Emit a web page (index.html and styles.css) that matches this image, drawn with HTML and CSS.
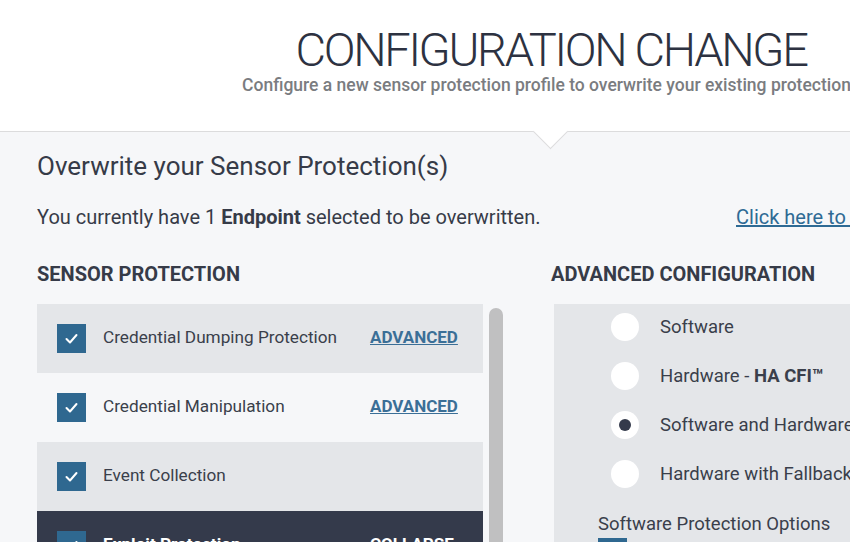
FILE: index.html
```html
<!DOCTYPE html>
<html>
<head>
<meta charset="utf-8">
<link rel="stylesheet" href="styles.css">
</head>
<body>
<div class="page">
  <header class="hero">
    <h1 class="hero-title">CONFIGURATION CHANGE</h1>
    <p class="hero-sub">Configure a new sensor protection profile to overwrite your existing protections</p>
  </header>
  <section class="panel">
    <div class="notch"></div>
    <h2 class="panel-title">Overwrite your Sensor Protection(s)</h2>
    <div class="info-row">
      <p class="info">You currently have 1 <b>Endpoint</b> selected to be overwritten.</p>
      <a class="info-link" href="#">Click here to change selection</a>
    </div>
    <div class="cols">
      <div class="col-left">
        <h3 class="section-head">SENSOR PROTECTION</h3>
        <div class="list-wrap">
          <ul class="list">
            <li class="item item-gray">
              <span class="cb"><svg viewBox="0 0 29 29" width="29" height="29"><polyline points="9.5,15 13,18.5 19.5,11" fill="none" stroke="#fff" stroke-width="2" stroke-linecap="round" stroke-linejoin="round"/></svg></span>
              <span class="item-label">Credential Dumping Protection</span>
              <a class="item-link" href="#">ADVANCED</a>
            </li>
            <li class="item item-light">
              <span class="cb"><svg viewBox="0 0 29 29" width="29" height="29"><polyline points="9.5,15 13,18.5 19.5,11" fill="none" stroke="#fff" stroke-width="2" stroke-linecap="round" stroke-linejoin="round"/></svg></span>
              <span class="item-label">Credential Manipulation</span>
              <a class="item-link" href="#">ADVANCED</a>
            </li>
            <li class="item item-gray">
              <span class="cb"><svg viewBox="0 0 29 29" width="29" height="29"><polyline points="9.5,15 13,18.5 19.5,11" fill="none" stroke="#fff" stroke-width="2" stroke-linecap="round" stroke-linejoin="round"/></svg></span>
              <span class="item-label">Event Collection</span>
            </li>
            <li class="item item-dark">
              <span class="cb"><svg viewBox="0 0 29 29" width="29" height="29"><polyline points="9.5,15 13,18.5 19.5,11" fill="none" stroke="#fff" stroke-width="2" stroke-linecap="round" stroke-linejoin="round"/></svg></span>
              <span class="item-label item-label-bold">Exploit Protection</span>
              <a class="item-link item-link-dark" href="#">COLLAPSE</a>
            </li>
          </ul>
          <div class="scrollbar"></div>
        </div>
      </div>
      <div class="col-right">
        <h3 class="section-head">ADVANCED CONFIGURATION</h3>
        <div class="adv-box">
          <ul class="radios">
            <li class="radio-row"><span class="radio"></span><span class="radio-label">Software</span></li>
            <li class="radio-row"><span class="radio"></span><span class="radio-label">Hardware - <b>HA CFI™</b></span></li>
            <li class="radio-row"><span class="radio radio-on"></span><span class="radio-label">Software and Hardware</span></li>
            <li class="radio-row"><span class="radio"></span><span class="radio-label">Hardware with Fallback</span></li>
          </ul>
          <p class="opt-head">Software Protection Options</p>
          <span class="opt-cb"></span>
        </div>
      </div>
    </div>
  </section>
</div>
</body>
</html>
```
FILE: styles.css
```css
html, body {
  margin: 0;
  padding: 0;
  background: #ffffff;
}
body {
  width: 850px;
  height: 542px;
  overflow: hidden;
  font-family: Roboto, "Liberation Sans", sans-serif;
  color: #363b48;
}
.page {
  width: 1102px;
}
.hero {
  height: 131px;
  text-align: center;
  box-sizing: border-box;
  padding-top: 26px;
}
.hero-title {
  margin: 0;
  font-size: 47px;
  font-weight: 300;
  line-height: 48px;
  color: #2d3241;
  letter-spacing: -2.3px;
}
.hero-sub {
  margin: 1px 0 0;
  font-size: 17.5px;
  font-weight: 500;
  line-height: 20px;
  color: #7a7c80;
}
.panel {
  position: relative;
  border-top: 1px solid #dcdcdd;
  background: #f6f7f9;
  padding: 18px 37px 0;
  height: 420px;
}
.notch {
  position: absolute;
  left: 538px;
  top: -13px;
  width: 24px;
  height: 24px;
  background: #ffffff;
  border-right: 1px solid #dcdcdd;
  border-bottom: 1px solid #dcdcdd;
  transform: rotate(45deg);
}
.panel-title {
  margin: 0;
  font-size: 26px;
  font-weight: 400;
  line-height: 32px;
  color: #363b48;
}
.info-row {
  display: flex;
  margin-top: 23px;
  align-items: baseline;
}
.info {
  margin: 0;
  font-size: 20px;
  line-height: 24px;
  width: 699px;
  flex: none;
}
.info b {
  font-weight: 700;
}
.info-link {
  font-size: 20px;
  line-height: 24px;
  color: #2e6a94;
  text-decoration: underline;
  white-space: nowrap;
}
.cols {
  display: flex;
  margin-top: 33px;
}
.col-left {
  width: 466px;
  flex: none;
}
.col-right {
  margin-left: 48px;
  flex: none;
  width: 600px;
}
.section-head {
  margin: 0;
  font-size: 20px;
  font-weight: 700;
  line-height: 24px;
  color: #363b48;
}
.list-wrap {
  display: flex;
  margin-top: 18px;
}
.list {
  list-style: none;
  margin: 0;
  padding: 0;
  width: 446px;
}
.item {
  display: flex;
  align-items: center;
  height: 69px;
  padding-left: 20px;
  box-sizing: border-box;
}
.item-gray { background: #e4e6e9; }
.item-light { background: #f6f7f9; }
.item-dark { background: #343a4b; }
.cb {
  width: 29px;
  height: 29px;
  background: #2f6890;
  flex: none;
  display: block;
}
.cb svg { display: block; }
.item-label {
  margin-left: 17px;
  margin-bottom: 3px;
  font-size: 17.2px;
  color: #3a3f4b;
  width: 267px;
  flex: none;
}
.item-label-bold {
  font-weight: 700;
  color: #ffffff;
}
.item-link {
  margin-bottom: 3px;
  font-size: 17px;
  font-weight: 700;
  color: #3b6f97;
  text-decoration: underline;
}
.item-link-dark {
  color: #ffffff;
  text-decoration: none;
}
.scrollbar {
  width: 14px;
  margin-left: 6px;
  margin-top: 4px;
  height: 300px;
  background: #c0c0c1;
  border-radius: 7px 7px 0 0;
}
.adv-box {
  margin-top: 18px;
  margin-left: 3px;
  background: #e4e6e9;
  height: 300px;
  padding: 9px 0 0 44px;
  box-sizing: border-box;
}
.radios {
  list-style: none;
  margin: 0;
  padding: 0 0 0 13px;
}
.radio-row {
  display: flex;
  align-items: center;
  height: 28px;
  margin-bottom: 21px;
}
.radio {
  width: 28px;
  height: 28px;
  border-radius: 50%;
  background: #ffffff;
  flex: none;
  display: flex;
  align-items: center;
  justify-content: center;
}
.radio-on::after {
  content: "";
  width: 12px;
  height: 12px;
  border-radius: 50%;
  background: #343a4b;
}
.radio-label {
  margin-left: 21px;
  font-size: 18.5px;
  color: #3a3f4b;
  white-space: nowrap;
}
.radio-label b {
  font-weight: 700;
}
.opt-head {
  margin: 25px 0 0;
  font-size: 18.5px;
  line-height: 22px;
  color: #3a3f4b;
}
.opt-cb {
  display: block;
  width: 29px;
  height: 29px;
  margin-top: 3px;
  background: #2f6890;
}
```
